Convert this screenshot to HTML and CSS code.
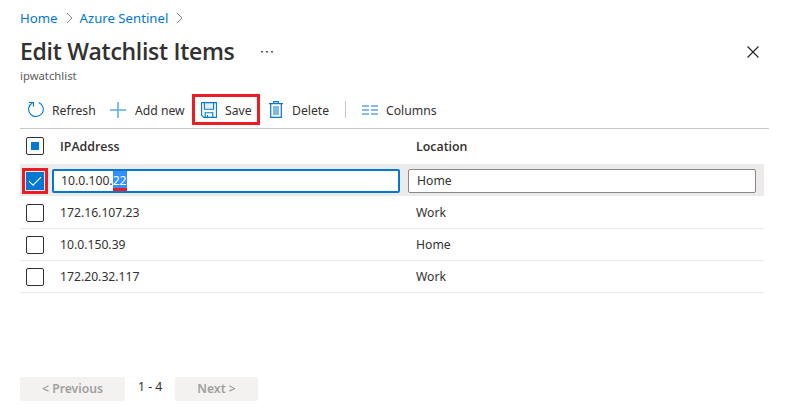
FILE: index.html
```html
<!DOCTYPE html>
<html lang="en">
<head>
<meta charset="utf-8">
<title>Edit Watchlist Items</title>
<link rel="stylesheet" href="styles.css">
</head>
<body>
<nav class="breadcrumb">
  <a>Home</a>
  <svg width="7" height="12" viewBox="0 0 7 12"><path d="M1 1l5 5-5 5"/></svg>
  <a>Azure Sentinel</a>
  <svg width="7" height="12" viewBox="0 0 7 12"><path d="M1 1l5 5-5 5"/></svg>
</nav>
<header class="heading">
  <h1>Edit Watchlist Items</h1>
  <svg class="more" width="12" height="4" viewBox="0 0 12 4"><path d="M0 1h2v1.5H0zM5 1h2v1.5H5zM10 1h2v1.5h-2z"/></svg>
  <svg class="close" width="12" height="12" viewBox="0 0 12 12"><path d="M.5.5l11 11M11.5.5l-11 11"/></svg>
</header>
<p class="subtitle">ipwatchlist</p>
<div class="toolbar">
  <div class="tool refresh">
    <svg width="16" height="17" viewBox="0 0 16 17"><path d="M10.7 1.5A7.3 7.3 0 1 1 4.6 1.8" fill="none" stroke="#0078d4" stroke-width="1.1"/><path d="M1 1.5h4.5v4.3" fill="none" stroke="#0078d4" stroke-width="1.1"/></svg>
    <span>Refresh</span>
  </div>
  <div class="tool add">
    <svg width="16" height="16" viewBox="0 0 16 16"><path d="M8 0v16M0 8h16" stroke="#5ea9e5" stroke-width="1.5"/></svg>
    <span>Add new</span>
  </div>
  <div class="tool save">
    <svg width="16" height="16" viewBox="0 0 16 16"><path d="M3.5 1h9v5.5h-9z" fill="#e3f0fb"/><path d="M.6.6h14.8v14.8H2.8L.6 13.2zM3.4.8v6.4h9.2V.8M4.2 15.2v-4.4h7.6v4.4M6.5 13v2.2" fill="none" stroke="#0078d4" stroke-width="1.1"/></svg>
    <span>Save</span>
  </div>
  <div class="tool delete">
    <svg width="14" height="17" viewBox="0 0 14 17"><path d="M4 5h6v9H4z" fill="#83b9e8"/><path d="M0 2.7h14M4.7 2.5V.7h4.6v1.8M1.7 3v13.3h10.6V3" fill="none" stroke="#0078d4" stroke-width="1.2"/></svg>
    <span>Delete</span>
  </div>
  <i class="divider"></i>
  <div class="tool columns">
    <svg width="16" height="10" viewBox="0 0 16 10"><path d="M0 0h7v2H0zM9 0h7v2H9zM0 4h7v2H0zM9 4h7v2H9zM0 8h7v2H0zM9 8h7v2H9z" fill="#83bcec"/></svg>
    <span>Columns</span>
  </div>
</div>
<main class="grid">
  <div class="row head"><i class="check mixed"></i><b class="cell">IPAddress</b><b class="cell">Location</b></div>
  <div class="row selected">
    <i class="check checked"><svg width="18" height="18" viewBox="0 0 18 18"><path d="M3 9.2l4 4 8-8"/></svg></i>
    <div class="field active"><span>10.0.100.</span><mark>22</mark></div>
    <div class="field">Home</div>
  </div>
  <div class="row"><i class="check"></i><span class="cell">172.16.107.23</span><span class="cell">Work</span></div>
  <div class="row"><i class="check"></i><span class="cell">10.0.150.39</span><span class="cell">Home</span></div>
  <div class="row"><i class="check"></i><span class="cell">172.20.32.117</span><span class="cell">Work</span></div>
</main>
<footer class="pager">
  <div class="page prev">&lt; Previous</div>
  <span class="range">1 - 4</span>
  <div class="page next">Next &gt;</div>
</footer>
</body>
</html>
```
FILE: styles.css
```css
* { box-sizing: border-box; }
body {
  margin: 0;
  padding: 9px 20px 0;
  height: 408px;
  overflow: hidden;
  background: #fff;
  color: #323130;
  font: 12.2px/18px "Noto Sans", "Open Sans", sans-serif;
  white-space: nowrap;
}
svg { display: block; flex: none; }
.breadcrumb { display: flex; align-items: center; height: 18px; color: #0078d4; font-size: 13.2px; }
.breadcrumb svg { margin: 0 7px 0 8px; fill: none; stroke: #8a8886; }
.heading { display: flex; align-items: center; height: 38px; margin-top: 6px; }
h1 { width: 241px; margin: -2px 0 0; font: 600 23px/38px "Open Sans", "Noto Sans", sans-serif; letter-spacing: -.3px; }
.more { fill: #555; }
.close { margin-left: 474px; stroke: #222; stroke-width: 1.1; }
.subtitle { height: 18px; margin: -4px 0 0; font-size: 11.3px; color: #605e5c; }
.toolbar { display: flex; align-items: center; width: 749px; height: 44px; padding: 6px 0 0 8px; border-bottom: 1px solid #c8c6c4; }
.tool { display: flex; align-items: center; flex: none; height: 31px; }
.tool span { margin-top: 2px; }
.refresh { width: 82px; gap: 8px; }
.add { width: 82px; gap: 9px; }
.save { width: 68px; padding-left: 6px; gap: 8px; border: 3px solid #ed1c24; }
.delete { width: 76px; margin-left: 9px; gap: 9px; }
.divider { width: 1px; height: 17px; background: #c8c6c4; }
.columns { margin-left: 16px; gap: 8px; }
.grid { width: 744px; padding-top: 4px; }
.row { display: flex; align-items: center; height: 32px; padding-left: 6px; border-bottom: 1px solid #edebe9; }
.head { padding-bottom: 5px; border-bottom-color: transparent; }
.head .cell { margin-top: 2px; }
.check { flex: none; width: 18px; height: 18px; border: 1px solid #323130; border-radius: 2px; margin-right: 16px; }
.mixed::before { content: ""; display: block; width: 8px; height: 8px; margin: 4px; background: #0078d4; }
.cell { flex: none; width: 356px; }
b { font-family: "Open Sans", "Noto Sans", sans-serif; font-weight: 600; font-size: 12.4px; }
.selected { background: #edebe9; border-bottom-color: #fff; box-shadow: 0 -1px #edebe9; }
.checked { border: 0; border-radius: 0; background: #0078d4; box-shadow: 0 0 0 1px #edebe9, 0 0 0 4px #ed1c24; margin: 1px 8px 0 0; }
.checked svg { fill: none; stroke: #fff; stroke-width: 1.1; }
.field { display: flex; flex: none; align-items: center; width: 348px; height: 24px; margin: 1px 8px 0 0; padding: 0 8px; background: #fff; border: 1px solid #8a8886; border-radius: 2px; }
.active { border: 2px solid #0078d4; padding: 0 7px; }
mark { position: relative; height: 20px; line-height: 20px; background: #3390ff; color: #fff; }
mark::after { content: ""; position: absolute; left: 0; right: 0; bottom: 0; height: 3px; background: #ed1c24; }
.pager { display: flex; margin-top: 84px; }
.page { height: 24px; border-radius: 2px; background: #f3f2f1; color: #a19f9d; font-weight: 600; line-height: 23px; text-align: center; }
.prev { width: 105px; }
.range { width: 50px; padding-left: 13px; line-height: 20px; }
.next { width: 83px; }
```
